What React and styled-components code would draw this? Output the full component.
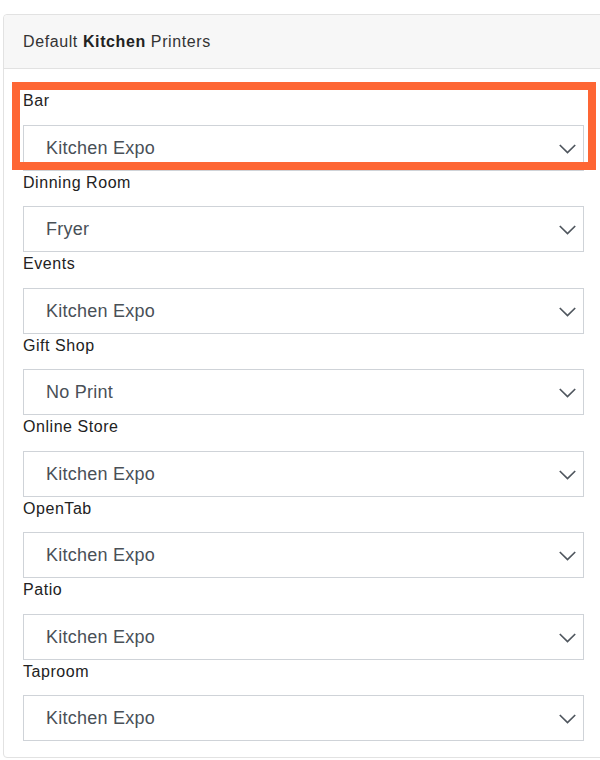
import React from "react";
import styled, { createGlobalStyle } from "styled-components";

const GlobalStyle = createGlobalStyle`
html, body {
  margin: 0;
  padding: 0;
  background: #ffffff;
  overflow: hidden;
}
body {
  font-family: "Liberation Sans", Arial, Helvetica, sans-serif;
  -webkit-font-smoothing: antialiased;
}
`;

const Page = styled.div`
width: 600px;
height: 760px;
overflow: hidden;
padding-top: 14px;
box-sizing: border-box;
`;

const Card = styled.div`
margin-left: 3px;
width: 620px;
border: 1px solid #e2e2e2;
border-radius: 4px;
background: #ffffff;
`;

const CardHeader = styled.div`
background: #f7f7f7;
border-bottom: 1px solid #e2e2e2;
padding: 16px 19px;
font-size: 16px;
letter-spacing: 0.6px;
line-height: 21px;
color: #333333;
border-radius: 4px 4px 0 0;

b {
  font-weight: bold;
  color: #222222;
}
`;

const CardBody = styled.div`
padding: 20px 19px 16px 19px;
width: 561px;
`;

const Group = styled.div`
position: relative;
display: flex;
flex-direction: column;
`;

const Label = styled.label`
font-size: 16px;
letter-spacing: 0.55px;
line-height: 24px;
color: #222222;
margin-bottom: 11.5px;
`;

const SelectBox = styled.div`
height: 46px;
box-sizing: border-box;
border: 1px solid #cfd3d8;
background: #ffffff;
display: flex;
align-items: center;
justify-content: space-between;
padding: 1px 7px 0 22px;
font-size: 18px;
letter-spacing: 0.25px;
color: #495057;
`;

const Highlight = styled.div`
position: absolute;
top: -7.5px;
left: -11px;
right: -12px;
bottom: 1px;
border: 8px solid #fe6634;
pointer-events: none;
`;

const Chevron = () => (
  <svg width="17" height="10" viewBox="0 0 17 10" style={{ marginTop: 1 }}>
    <polyline
      points="0.8,1 8.5,8.6 16.2,1"
      fill="none"
      stroke="#4f565e"
      strokeWidth="1.7"
    />
  </svg>
);

const printers = [
  { area: "Bar", printer: "Kitchen Expo", highlighted: true },
  { area: "Dinning Room", printer: "Fryer" },
  { area: "Events", printer: "Kitchen Expo" },
  { area: "Gift Shop", printer: "No Print" },
  { area: "Online Store", printer: "Kitchen Expo" },
  { area: "OpenTab", printer: "Kitchen Expo" },
  { area: "Patio", printer: "Kitchen Expo" },
  { area: "Taproom", printer: "Kitchen Expo" },
];

function App() {
  return (
    <>
      <GlobalStyle />
      <Page>
        <Card>
          <CardHeader>
            Default <b>Kitchen</b> Printers
          </CardHeader>
          <CardBody>
            {printers.map((p) => (
              <Group key={p.area}>
                <Label>{p.area}</Label>
                <SelectBox>
                  <span>{p.printer}</span>
                  <Chevron />
                </SelectBox>
                {p.highlighted && <Highlight />}
              </Group>
            ))}
          </CardBody>
        </Card>
      </Page>
    </>
  );
}

export default App;
